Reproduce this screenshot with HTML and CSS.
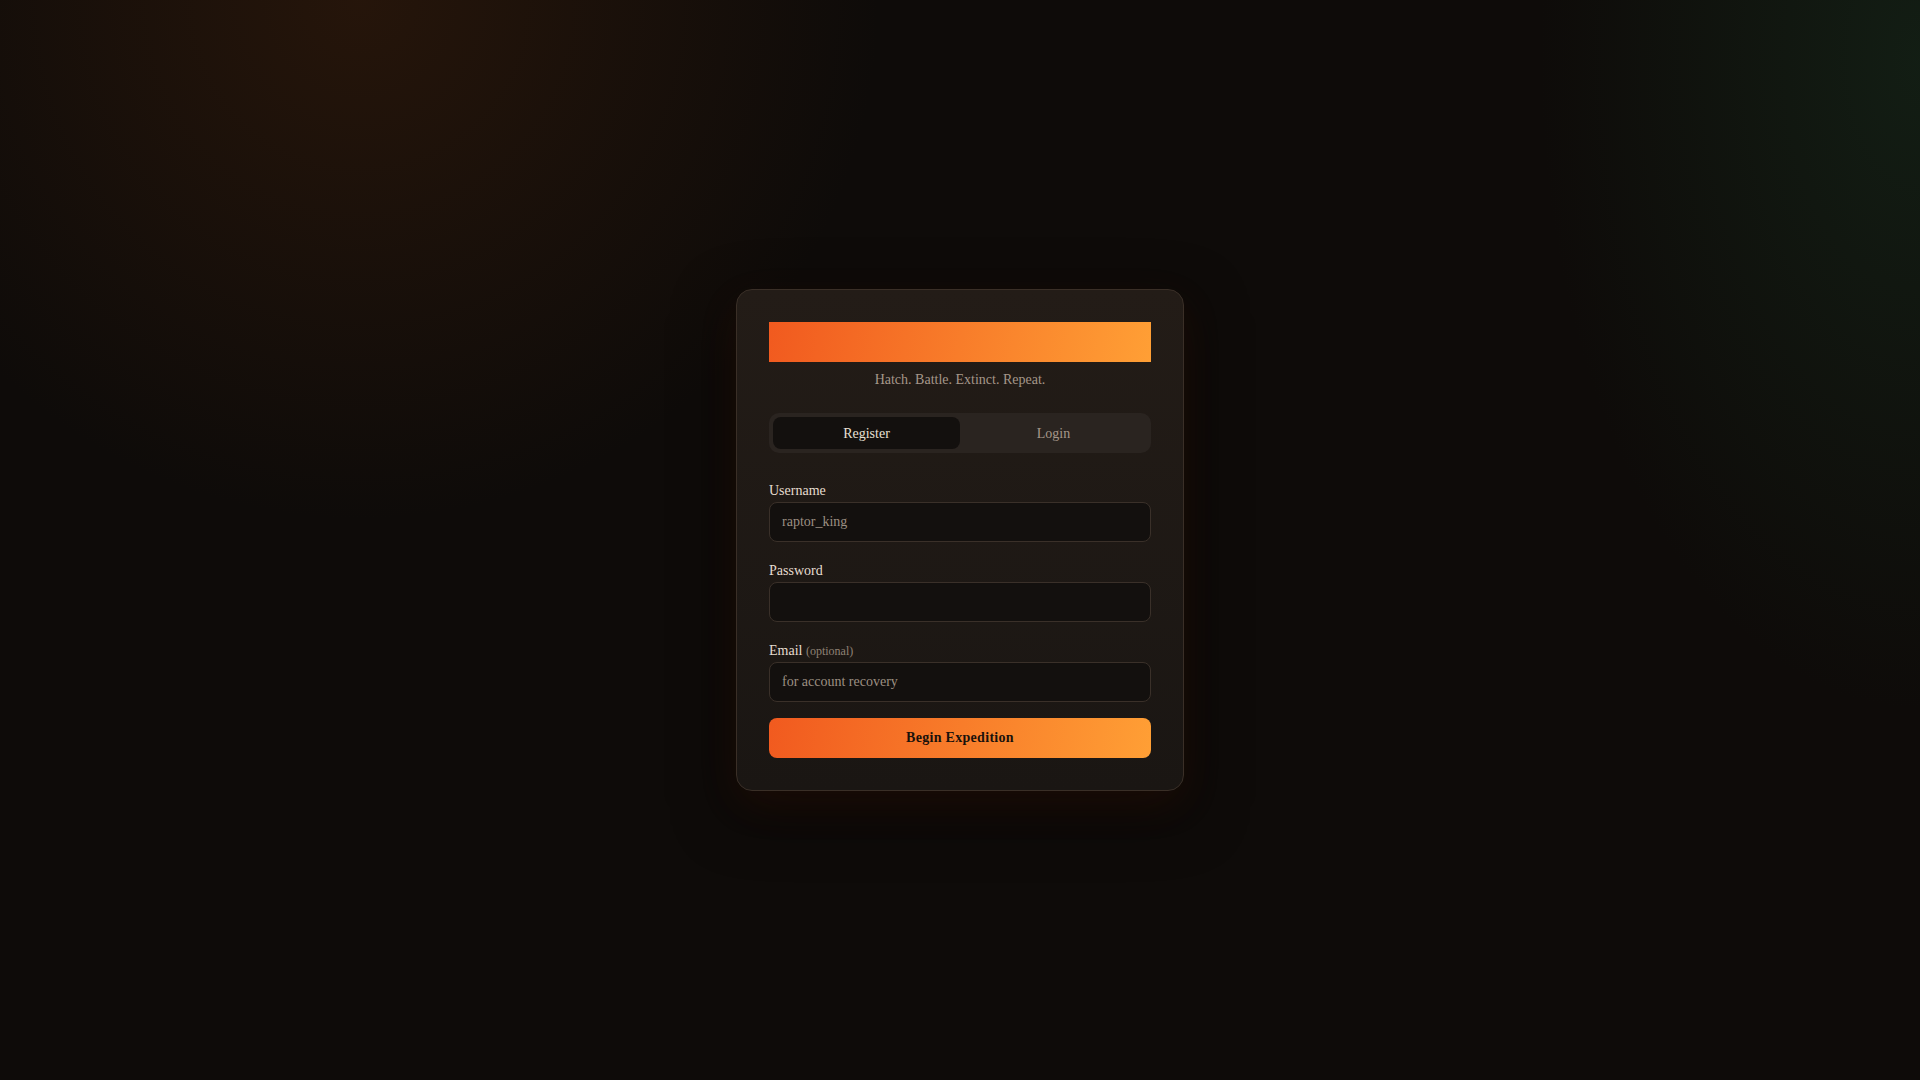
FILE: index.html
```html
<!DOCTYPE html>
<html lang="en">
<head>
<meta charset="utf-8">
<title>Dino Expedition</title>
<link rel="stylesheet" href="styles.css">
</head>
<body>
<main class="page">
  <section class="card">
    <div class="banner"></div>
    <p class="tagline">Hatch. Battle. Extinct. Repeat.</p>
    <div class="tabs">
      <button class="tab active">Register</button>
      <button class="tab">Login</button>
    </div>
    <form class="form">
      <div class="field">
        <label class="label">Username</label>
        <input class="input" type="text" placeholder="raptor_king">
      </div>
      <div class="field">
        <label class="label">Password</label>
        <input class="input" type="password">
      </div>
      <div class="field last">
        <label class="label">Email <span class="opt">(optional)</span></label>
        <input class="input" type="email" placeholder="for account recovery">
      </div>
      <button class="submit" type="button">Begin Expedition</button>
    </form>
  </section>
</main>
</body>
</html>
```
FILE: styles.css
```css
* { box-sizing: border-box; }
html, body { height: 100%; }
body {
  margin: 0;
  font-family: "Liberation Serif", "Times New Roman", serif;
  color: #e6ddd0;
  background:
    radial-gradient(ellipse 520px 520px at 360px 0px, rgba(70, 35, 12, 0.42), rgba(70, 35, 12, 0) 100%),
    radial-gradient(ellipse 380px 650px at 1920px 60px, rgba(25, 55, 35, 0.42), rgba(25, 55, 35, 0) 100%),
    #0e0b09;
}
.page {
  height: 100%;
  display: flex;
  align-items: center;
  justify-content: center;
}
.card {
  width: 448px;
  padding: 32px;
  border: 1px solid #3a2f27;
  border-radius: 16px;
  background: linear-gradient(180deg, #231c17 0%, #1a1613 100%);
  box-shadow: 0 14px 40px rgba(200, 70, 20, 0.10), 0 20px 60px rgba(0, 0, 0, 0.55);
}
.banner {
  height: 40px;
  background: linear-gradient(100deg, #f15a1f 0%, #ff9f35 100%);
}
.tagline {
  margin: 9px 0 24px;
  font-size: 14px;
  line-height: 18px;
  text-align: center;
  color: #a5978a;
}
.tabs {
  display: flex;
  gap: 0;
  padding: 4px;
  background: #2a2420;
  border-radius: 10px;
  margin-bottom: 29px;
}
.tab {
  flex: 1;
  height: 32px;
  padding: 1px 0 0;
  border: 0;
  border-radius: 8px;
  background: transparent;
  font-family: inherit;
  font-size: 14px;
  color: #a5978a;
  cursor: pointer;
}
.tab.active {
  background: #13100e;
  color: #e8e0d4;
}
.form { margin: 0; }
.field { margin-bottom: 20px; }
.field.last { margin-bottom: 16px; }
.label {
  display: block;
  font-size: 14px;
  line-height: 18px;
  margin-bottom: 2px;
  color: #e6ddd0;
}
.opt {
  font-size: 12px;
  color: #8f8275;
}
.input {
  display: block;
  width: 100%;
  height: 40px;
  padding: 0 12px;
  border: 1px solid #3a3029;
  border-radius: 8px;
  background: #13100e;
  font-family: inherit;
  font-size: 14px;
  color: #e6ddd0;
  outline: none;
}
.input::placeholder { color: #9c8f82; }
.submit {
  display: block;
  width: 100%;
  height: 40px;
  border: 0;
  border-radius: 8px;
  background: linear-gradient(100deg, #f15a1f 0%, #ff9f35 100%);
  font-family: inherit;
  font-size: 14px;
  font-weight: bold;
  letter-spacing: 0.3px;
  color: #1a120c;
  cursor: pointer;
}
```
